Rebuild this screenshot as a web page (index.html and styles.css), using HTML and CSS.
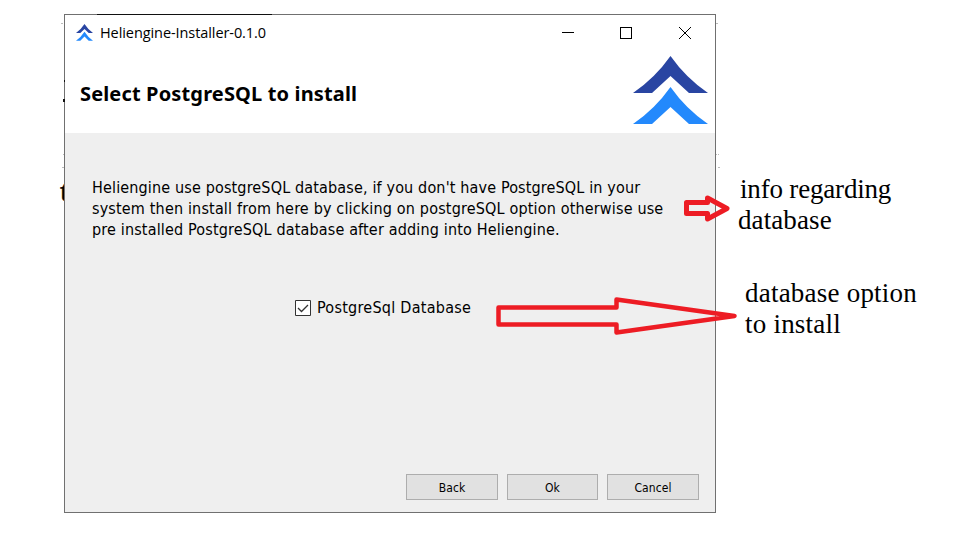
FILE: index.html
```html
<!DOCTYPE html>
<html lang="en">
<head>
<meta charset="utf-8">
<title>Heliengine-Installer-0.1.0</title>
<link rel="stylesheet" href="styles.css">
</head>
<body>
<main class="stage">
  <span class="behind">t</span>
  <section class="window">
    <header class="top">
      <div class="titlebar">
        <svg class="app-icon" viewBox="0 0 75 69" preserveAspectRatio="none"><path fill="#2945a2" d="M0 37Q22 22 37.500 0Q53 22 75 37H56L37.500 20L19 37Z"/><path fill="#2389fc" d="M0 68Q22 53 37.500 31Q53 53 75 68H56L37.500 51L19 68Z"/></svg>
        <span class="caption">Heliengine-Installer-0.1.0</span>
        <svg class="controls" width="130" height="12" viewBox="0 0 130 12" fill="none" stroke="#000" shape-rendering="crispEdges"><path d="M0 5.500H12M58.500.500H69.500V11.500H58.500Z"/><path d="M117 0L129 12M129 0L117 12" shape-rendering="auto"/></svg>
      </div>
      <div class="heading">
        <h1>Select PostgreSQL to install</h1>
        <svg class="logo" width="75" height="69" viewBox="0 0 75 69"><path fill="#2945a2" d="M0 37Q22 22 37.500 0Q53 22 75 37H56L37.500 20L19 37Z"/><path fill="#2389fc" d="M0 68Q22 53 37.500 31Q53 53 75 68H56L37.500 51L19 68Z"/></svg>
      </div>
    </header>
    <p class="info"><span class="l1">Heliengine use postgreSQL database, if you don't have PostgreSQL in your</span><br><span class="l2">system then install from here by clicking on postgreSQL option otherwise use</span><br><span class="l3">pre installed PostgreSQL database after adding into Heliengine.</span></p>
    <div class="option">
      <svg width="16" height="16" viewBox="0 0 16 16"><path d="M.500.500H15.500V15.500H.500Z" fill="#fff" stroke="#333"/><path d="M3 8L6.500 11.500L13 5" fill="none" stroke="#333" stroke-width="1.300"/></svg>
      <span>PostgreSql Database</span>
    </div>
    <footer class="actions"><button class="back">Back</button><button class="ok">Ok</button><button class="cancel">Cancel</button></footer>
  </section>
  <aside class="notes">
    <p class="note first"><span class="n1">info regarding</span><br><span class="n2">database</span></p>
    <p class="note second">database option<br>to install</p>
  </aside>
  <svg class="marks" width="959" height="534" viewBox="0 0 959 534" fill="none">
    <path d="M97 14.500H272" stroke="#111"/>
    <path d="M61 23.500h2M716 23.500h2M63 154.500h1M716 154.500h1M718 154.500h1M62 167.500h2M718 167.500h2" stroke="#bbb"/>
    <path d="M64 80h1v2h-1zM63 99h2v3h-2z" fill="#111"/>
    <g stroke="#ed1c24" stroke-linejoin="round">
      <path stroke-width="5" d="M686.500 202.500H707.500V198L727 208.500L707.500 219V213.500H686.500Z"/>
      <path stroke-width="4.500" d="M498.500 307.500H616.500V299.500L734.500 316L616.500 332.500V324.500H498.500Z"/>
    </g>
  </svg>
</main>
</body>
</html>
```
FILE: styles.css
```css
* { box-sizing: border-box; }
body { margin: 0; background: #fff; color: #000; }
p, h1 { margin: 0; font-weight: normal; }
.stage { position: relative; display: flex; width: 959px; height: 534px; padding: 14px 0 0 64px; overflow: hidden; }
.behind { position: absolute; left: 60px; top: 174px; font: bold 30px/34px "Liberation Serif", serif; -webkit-text-stroke: 0.5px #000; }
.window { position: relative; flex: none; display: flex; flex-direction: column; width: 652px; height: 499px; border: 1px solid #707070; background: #efefef; font-family: "DejaVu Sans Condensed", "DejaVu Sans", sans-serif; }
.top { height: 118px; background: #fff; }
.titlebar { display: flex; align-items: center; height: 36px; padding: 0 23px 0 11px; }
.app-icon { width: 17px; height: 17px; margin-bottom: 1px; }
.caption { margin: 0 0 0 7px; font: 14.500px/20px "Open Sans", sans-serif; white-space: nowrap; letter-spacing: -0.080px; }
.controls { margin-left: auto; }
.heading { display: flex; justify-content: space-between; padding: 5px 7px 0 15px; }
h1 { padding-top: 26px; font: bold 20px/24px "Noto Sans", sans-serif; white-space: nowrap; letter-spacing: 0.150px; }
.info { margin: 44px 0 0 27px; font-size: 16px; line-height: 21px; white-space: nowrap; }
.l1 { letter-spacing: 0.150px; }
.l2 { letter-spacing: 0.168px; }
.l3 { letter-spacing: 0.158px; }
.option { display: flex; align-items: center; gap: 6px; margin: 56px 0 0 230px; font-size: 16px; line-height: 24px; white-space: nowrap; letter-spacing: 0.260px; }
.actions { display: flex; gap: 9px; margin: auto 16px 12px auto; }
button { height: 26px; width: 92px; padding: 1px 0 0; border: 1px solid #adadad; background: #e1e1e1; color: #000; font: 12px "DejaVu Sans Condensed", sans-serif; letter-spacing: 0.100px; }
.ok { width: 91px; }
.notes { padding: 160px 0 0 22px; font: 27px/31px "Liberation Serif", serif; white-space: nowrap; }
.n1 { margin-left: 2px; letter-spacing: -0.180px; }
.n2 { letter-spacing: 0.100px; }
.second { margin: 42px 0 0 7px; letter-spacing: 0.220px; }
.marks { position: absolute; left: 0; top: 0; pointer-events: none; }
```
